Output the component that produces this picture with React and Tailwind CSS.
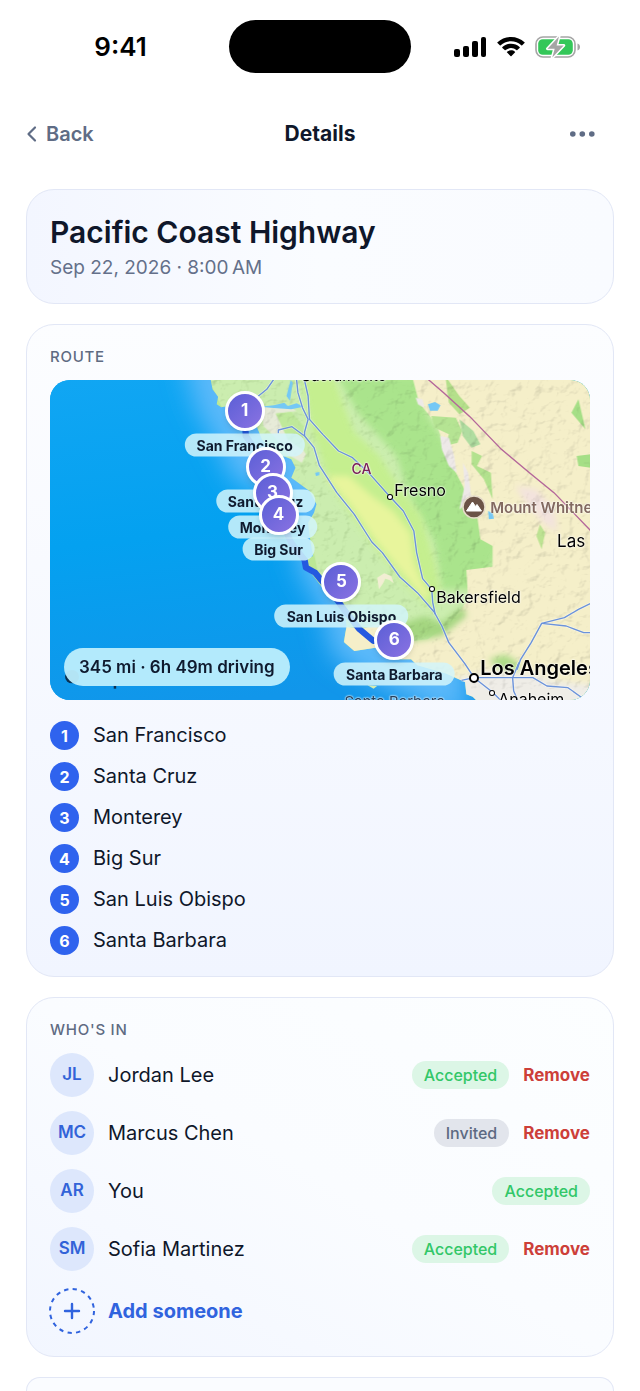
import React from "react";

const MAP_W = 541;
const MAP_H = 320;
const at = (x, y) => ({ left: `${(x / MAP_W) * 100}%`, top: `${(y / MAP_H) * 100}%` });

const stops = [
  { name: "San Francisco", x: 195, y: 31 },
  { name: "Santa Cruz", x: 216, y: 87 },
  { name: "Monterey", x: 223, y: 113 },
  { name: "Big Sur", x: 229, y: 135 },
  { name: "San Luis Obispo", x: 292, y: 202 },
  { name: "Santa Barbara", x: 345, y: 260 },
];

const people = [
  { initials: "JL", name: "Jordan Lee", status: "Accepted", removable: true },
  { initials: "MC", name: "Marcus Chen", status: "Invited", removable: true },
  { initials: "AR", name: "You", status: "Accepted", removable: false },
  { initials: "SM", name: "Sofia Martinez", status: "Accepted", removable: true },
];

function StatusBar() {
  return (
    <div className="grid grid-cols-[1fr_182px_1fr] items-center pt-5 text-black">
      <div className="pl-3 text-center text-[26px] font-semibold">9:41</div>
      <div className="h-[53px] rounded-full bg-black" />
      <div className="flex items-center justify-center gap-2.5 pr-4">
        <svg width="33" height="22" viewBox="0 0 33 22" aria-hidden="true">
          <rect x="0" y="13" width="6" height="8" rx="2" />
          <rect x="9" y="10" width="6" height="11" rx="2" />
          <rect x="18" y="5" width="6" height="16" rx="2" />
          <rect x="27" y="1" width="5" height="20" rx="2" />
        </svg>
        <svg width="28" height="22" viewBox="0 0 28 22" aria-hidden="true">
          <path d="M14 1C8.7 1 4 3 .5 6.2c-.3.3-.3.6 0 .9l2.3 2.2c.3.3.6.3.9 0C6.5 6.8 10.1 5.3 14 5.3s7.500 1.500 10.300 4c.3.3.6.3.9 0l2.300-2.200c.3-.3.3-.6 0-.9C24 3 19.300 1 14 1z" />
          <path d="M14 7.800c-3.300 0-6.300 1.200-8.600 3.200-.3.3-.3.6 0 .9l2.300 2.200c.3.3.6.3.9 0 1.500-1.200 3.400-2 5.400-2s3.900.8 5.400 2c.3.3.6.3.9 0l2.300-2.200c.3-.3.3-.6 0-.9-2.300-2-5.300-3.200-8.600-3.200z" />
          <path d="M14 14.300c-1.500 0-2.900.5-3.900 1.400-.3.300-.3.600 0 .9l3.400 3.500c.3.300.7.300 1 0l3.400-3.500c.3-.3.3-.6 0-.9-1-.9-2.400-1.400-3.900-1.400z" />
        </svg>
        <svg width="46" height="22" viewBox="0 0 46 22" aria-hidden="true">
          <rect x="1" y="1" width="39" height="20" rx="7" fill="none" stroke="#a5a5a5" strokeWidth="1.600" />
          <rect x="3.200" y="3.200" width="34.600" height="15.600" rx="4.500" fill="#34c759" />
          <path d="M42.500 7.500v7c1.500-.5 2.500-1.900 2.500-3.500s-1-3-2.500-3.500z" fill="#a5a5a5" />
          <path d="M24 .5L12.500 12.700h7.200L17.300 21.500 28.700 9.400h-7.100z" fill="#a5a5a5" stroke="#fff" strokeWidth="3" strokeLinejoin="round" />
          <path d="M24 .5L12.500 12.700h7.200L17.300 21.500 28.700 9.400h-7.100z" fill="#a5a5a5" />
        </svg>
      </div>
    </div>
  );
}

function Terrain() {
  const land =
    "M468 0L475 40L491 62L487 85L500 94L520 90L560 110L600 148L616 190L640 220L672 238L700 250L712 275L700 305L720 320L752 345L772 385L765 410L748 440L752 480L762 540L738 552L735 575L760 596L785 630L828 668L852 700L858 750L850 798L880 825L940 815L965 832L1005 850L1042 850L1060 868L1140 892L1175 908L1196 918L1200 955L1218 962L1235 980L1600 980V0Z";
  const highways = [
    "M714 0L719 50L732 95L748 130L738 168V180",
    "M735 0L748 60L752 130L790 175L835 225L875 245L925 295L980 360L1020 405L1050 465L1058 530L1075 608L1101 640L1104 680L1111 715",
    "M663 172V162L702 152L738 180L765 215L780 268L830 350L880 415L910 465L930 498L960 530L1010 603L1060 650L1108 708L1130 750L1150 800L1195 862L1222 905L1274 948L1300 975",
    "M650 10L630 40L600 65",
    "M1186 913L1222 905H1390L1430 930L1490 935L1530 965",
    "M1350 860L1345 880L1355 850L1385 800L1415 742L1480 725L1520 700L1560 680",
    "M1415 742L1485 750L1535 770H1560",
    "M1350 860L1332 905L1335 945L1350 980",
  ];
  return (
    <svg className="block h-full w-full" viewBox="11 12 1542 960" preserveAspectRatio="none" aria-hidden="true">
      <defs>
        <linearGradient id="sea" x1="0" y1="0" x2=".2" y2="1">
          <stop offset="0" stopColor="#11a6f3" />
          <stop offset=".5" stopColor="#04a1f0" />
          <stop offset="1" stopColor="#1196ea" />
        </linearGradient>
        <filter id="haze" x="-50%" y="-30%" width="200%" height="160%">
          <feGaussianBlur stdDeviation="36" />
        </filter>
        <filter id="soft" x="-20%" y="-20%" width="140%" height="140%">
          <feGaussianBlur stdDeviation="9" />
        </filter>
        <filter id="relief" x="0" y="0" width="100%" height="100%">
          <feTurbulence type="fractalNoise" baseFrequency=".026" numOctaves="4" seed="11" result="n" />
          <feDiffuseLighting in="n" surfaceScale="15" diffuseConstant="1.350" lightingColor="#ffffff" result="lit">
            <feDistantLight azimuth="225" elevation="58" />
          </feDiffuseLighting>
          <feComposite in="lit" in2="SourceGraphic" operator="in" />
        </filter>
        <clipPath id="landClip">
          <path d={land} />
        </clipPath>
      </defs>
      <rect width="1600" height="1000" fill="url(#sea)" />
      <path d="M390 -60L430 100L490 210L540 320L640 350L710 440L720 580L790 710L820 840L940 920L1200 1040V-60Z" fill="#5cb9fa" filter="url(#haze)" />
      <path d={land} fill="#bbe895" />
      <g clipPath="url(#landClip)">
        <path d="M830 0L890 110L1000 240L1040 370L1110 500L1130 640L1240 640L1300 500L1200 300L1090 120L1060 0Z" fill="#aae48c" filter="url(#soft)" />
        <path d="M1045 0L1065 80L1115 145L1150 250L1190 330L1232 430L1240 490L1275 510L1275 572L1200 582L1205 670L1160 735L1090 790L1000 800L960 740L900 760L850 750V840L960 840L1100 920L1300 1000L1600 1000V0Z" fill="#f5efc9" />
        <path d="M1000 750L1080 720L1130 740L1190 690L1200 720L1130 780L1050 795Z" fill="#a4d680" filter="url(#soft)" />
        <path d="M1100 120L1170 125L1188 165L1175 200L1140 210L1150 175L1110 155Z" fill="#b5e493" />
        <path d="M1140 0L1180 60L1210 95L1180 115L1150 80Z" fill="#b5e08b" />
        <path d="M1180 130L1220 165L1240 205L1215 215L1190 180Z" fill="#b0dda0" />
        <path d="M1215 225L1245 240L1230 270L1270 290L1275 370L1250 310L1215 265Z" fill="#b3e28e" />
        <path d="M1520 70L1540 160L1500 110Z" fill="#a5df86" />
        <path d="M1515 240L1555 235V275L1520 270Z" fill="#a5df86" />
        <path d="M1410 445L1425 470L1415 520L1400 480Z" fill="#bde392" />
        <path d="M1265 850L1310 835L1350 860L1345 890L1290 880Z" fill="#aedb88" filter="url(#soft)" />
        <path d="M1340 330L1400 340L1450 400L1460 470L1420 440L1370 380Z" fill="#f3e3de" filter="url(#soft)" />
        <path d="M1170 905L1270 885L1400 895L1450 915L1600 930V1000H1200Z" fill="#efede7" filter="url(#soft)" />
        <path d="M980 560L1015 550L1028 575L1005 590Z" fill="#f2eed3" />
        <path d="M615 92L700 95L715 105L660 112L690 150L720 200L742 235L730 260L690 235L650 180L620 150Z" fill="#eceadf" opacity=".85" />
        <path d="M655 112L700 108L735 150L730 220L690 190Z" fill="#bfe99b" />
        <path d="M1055 65L1075 70L1080 95L1062 85Z M1125 180L1150 185L1165 240L1172 290L1150 270L1130 220Z M1190 260L1205 290L1215 370L1180 400L1195 330Z" fill="#eee9e8" />
        <path
          d="M460 0H1560V940H1220L960 820L780 610L740 400L640 220L500 90Z"
          fill="#fff"
          filter="url(#relief)"
          className="opacity-25 mix-blend-multiply"
        />
        <path d="M730 0L760 160L800 290L850 380L930 500L1020 615L1100 700L1125 640L1105 540L1070 420L1000 320L950 240L880 170L850 90L820 0Z" fill="#c5ef8f" filter="url(#soft)" />
        <path d="M800 300L865 300L930 360L990 405L1040 470L1052 560L1075 620L1095 650L1085 675L1020 595L940 495L870 390L815 320Z" fill="#e8f59c" filter="url(#soft)" />
        <path d="M950 640L945 605L965 592L985 600L992 622L980 612L968 608L962 622Z" fill="#f2eed3" />
        <path d="M610 92L650 88L680 80L690 90L715 82L735 92L700 100L650 96Z M686 60L698 12L704 20L696 75Z M1090 85L1110 78L1126 88L1118 104L1096 104Z M768 290L780 288V298L770 300Z M1262 405L1275 412L1278 428L1264 430Z" fill="#74c8f5" />
      </g>
      <path d="M918 928L945 930L935 938Z" fill="#d5edaf" />
      <g fill="none" stroke="#fff" strokeOpacity=".45" strokeWidth="8" strokeLinejoin="round">
        {highways.map((d) => (
          <path key={d} d={d} />
        ))}
      </g>
      <g fill="none" stroke="#6b93da" strokeWidth="4" strokeLinejoin="round">
        {highways.map((d) => (
          <path key={d} d={d} />
        ))}
      </g>
      <path d="M1085 5L1135 50L1210 122L1300 220L1380 290L1450 350L1510 415L1560 470" fill="none" stroke="#b4679a" strokeWidth="4" />
      <path
        d="M567 110L570 180L610 240L628 270L648 345L662 415L700 500L738 552L742 575L768 590L790 618L830 670L850 700L895 760L935 795L995 790"
        fill="none"
        stroke="#2459e0"
        strokeWidth="18"
        strokeLinejoin="round"
      />
      <circle cx="74" cy="902" r="20" fill="#0b3050" />
      <rect x="193" y="927" width="7" height="11" fill="#0b3050" />
    </svg>
  );
}

function Town({ x, y }) {
  return (
    <span
      className="absolute size-1 -translate-x-1/2 -translate-y-1/2 rounded-full bg-white ring-1 ring-black"
      style={at(x, y)}
    />
  );
}

const halo = "[text-shadow:0_0_2px_#fff,0_0_2px_#fff]";

function RouteMap() {
  return (
    <div className="relative h-80 overflow-hidden rounded-[20px] bg-[#04a1f0]">
      <Terrain />
      <span className={`absolute -translate-y-1/2 text-[15px] text-black ${halo}`} style={at(252, -4)}>
        Sacramento
      </span>
      <span className={`absolute -translate-y-1/2 text-sm font-medium text-[#7a2359] ${halo}`} style={at(302, 89)}>
        CA
      </span>
      <Town x={341} y={117} />
      <span className={`absolute -translate-y-1/2 text-base text-black ${halo}`} style={at(345, 110)}>
        Fresno
      </span>
      <Town x={383} y={209} />
      <span className={`absolute -translate-y-1/2 text-base text-black ${halo}`} style={at(387, 217)}>
        Bakersfield
      </span>
      <span className={`absolute -translate-y-1/2 text-[17px] text-black ${halo}`} style={at(508, 162)}>
        Las
      </span>
      <svg
        className="absolute size-6 -translate-x-1/2 -translate-y-1/2"
        style={at(425, 127)}
        viewBox="0 0 24 24"
        aria-hidden="true"
      >
        <circle cx="12" cy="12" r="11" fill="#6b5347" stroke="#e6dccb" strokeWidth="1.500" />
        <path d="M4.500 16L10.500 7l3 4.500 1.500-2 4.500 6.500z" fill="#fff" stroke="#fff" strokeLinejoin="round" />
      </svg>
      <span
        className={`absolute -translate-y-1/2 whitespace-nowrap text-[15px] font-semibold text-[#82695f] ${halo}`}
        style={at(441, 128)}
      >
        Mount Whitney
      </span>
      <span
        className="absolute size-2.5 -translate-x-1/2 -translate-y-1/2 rounded-full border-2 border-black bg-white"
        style={at(425, 298)}
      />
      <span
        className={`absolute -translate-y-1/2 whitespace-nowrap text-xl font-semibold text-black ${halo}`}
        style={at(431, 288)}
      >
        Los Angeles
      </span>
      <Town x={443} y={313} />
      <span className={`absolute -translate-y-1/2 text-base text-black ${halo}`} style={at(449, 319)}>
        Anaheim
      </span>
      <span className={`absolute -translate-y-1/2 whitespace-nowrap text-[15px] text-[#26405c] ${halo}`} style={at(295, 322)}>
        Santa Barbara
      </span>
      {stops.map((s) => (
        <span
          key={s.name}
          className="absolute -translate-x-1/2 -translate-y-1/2 whitespace-nowrap rounded-full bg-[#d2f4fa]/85 px-3 text-sm leading-[23px] font-bold text-[#0f1a2e]"
          style={at(s.x, s.y + 34)}
        >
          {s.name}
        </span>
      ))}
      {stops.map((s, i) => (
        <span
          key={s.name}
          className="absolute flex size-10 -translate-x-1/2 -translate-y-1/2 items-center justify-center rounded-full border-3 border-white bg-linear-to-br from-[#5b5fd6] to-[#8a72e2] text-[17px] font-bold text-white shadow-md"
          style={at(s.x, s.y)}
        >
          {i + 1}
        </span>
      ))}
      <div className="absolute bottom-3.5 left-3.5 rounded-full bg-[#bdeefd]/95 px-[15px] text-[17px] leading-[38px] font-semibold text-[#0f1a2e]">
        345 mi · 6h 49m driving
      </div>
    </div>
  );
}

function Badge({ status }) {
  const tone = status === "Accepted" ? "bg-[#dcf6e6] text-[#32c768]" : "bg-[#e2e5ec] text-[#5d6a82]";
  return <span className={`rounded-full px-3 text-base leading-7 font-medium ${tone}`}>{status}</span>;
}

export default function App() {
  const card = "rounded-[28px] border border-[#e2e7f6] px-[23px]";
  const label = "text-[15px] leading-4 font-medium tracking-wider text-[#5f6b82]";
  return (
    <div className="min-h-screen bg-white font-[Inter,'Liberation_Sans',sans-serif] text-[#0f172a]">
      <StatusBar />
      <header className="mt-[41px] grid h-10 grid-cols-3 items-center px-[26px] text-xl font-semibold">
        <button className="flex items-center gap-2 justify-self-start text-[#5f6c85]">
          <svg width="12" height="18" viewBox="0 0 12 18" fill="none" stroke="currentColor" strokeWidth="2.200" strokeLinecap="round" strokeLinejoin="round" aria-hidden="true">
            <path d="M9 2.500L2.500 9L9 15.500" />
          </svg>
          Back
        </button>
        <h1 className="text-center text-[21px] font-bold">Details</h1>
        <button aria-label="More options" className="mr-[18px] justify-self-end text-[#5f6c85]">
          <svg width="26" height="8" viewBox="0 0 26 8" fill="currentColor" aria-hidden="true">
            <circle cx="2.800" cy="4" r="2.800" />
            <circle cx="12.300" cy="4" r="2.800" />
            <circle cx="21.800" cy="4" r="2.800" />
          </svg>
        </button>
      </header>
      <main className="mt-[35px] flex flex-col gap-5 px-[26px]">
        <section className={`${card} bg-linear-to-r from-[#f3f6ff] via-[#fafcff] to-[#f9fbff] pt-6 pb-[21px]`}>
          <h2 className="text-[30px] leading-9 font-semibold">Pacific Coast Highway</h2>
          <p className="mt-1 text-[19px] leading-7 text-[#64708a]">Sep 22, 2026 · 8:00{"\u2009"}AM</p>
        </section>

        <section className={`${card} bg-linear-to-b from-[#fcfdff] to-[#f1f5ff] pt-6 pb-[21px]`}>
          <h3 className={label}>ROUTE</h3>
          <div className="mt-[15px]">
            <RouteMap />
          </div>
          <ol className="mt-[21px] flex flex-col gap-3">
            {stops.map((s, i) => (
              <li key={s.name} className="flex items-center gap-3.5 text-xl leading-[29px]">
                <span className="flex size-[29px] items-center justify-center rounded-full bg-[#2f63ee] text-base font-bold text-white">
                  {i + 1}
                </span>
                {s.name}
              </li>
            ))}
          </ol>
        </section>

        <section className={`${card} bg-linear-to-bl from-[#fcfeff] via-[#fafcff] to-[#f2f6ff] pt-6 pb-[22px]`}>
          <h3 className={label}>WHO'S IN</h3>
          <ul className="mt-[15px] flex flex-col gap-3.5">
            {people.map((p) => (
              <li key={p.initials} className="flex items-center gap-3.5">
                <span className="flex size-11 items-center justify-center rounded-full bg-[#dde7fc] text-[17px] font-semibold text-[#3263d8]">
                  {p.initials}
                </span>
                <span className="flex-1 text-xl">{p.name}</span>
                <Badge status={p.status} />
                {p.removable && <button className="text-[17px] leading-7 font-bold text-[#cd3f39]">Remove</button>}
              </li>
            ))}
          </ul>
          <button className="mt-[17px] flex items-center gap-3.5 text-xl font-bold text-[#3063de]">
            <svg className="-mx-px" width="46" height="46" viewBox="0 0 46 46" fill="none" stroke="currentColor" strokeWidth="2" aria-hidden="true">
              <circle cx="23" cy="23" r="22" strokeDasharray="4.300 4.338" />
              <path d="M23 16v14M16 23h14" strokeLinecap="round" strokeWidth="2.400" />
            </svg>
            Add someone
          </button>
        </section>

        <section className="h-3.5 rounded-t-[28px] border border-b-0 border-[#e2e7f6] bg-[#fafcff]" />
      </main>
    </div>
  );
}
